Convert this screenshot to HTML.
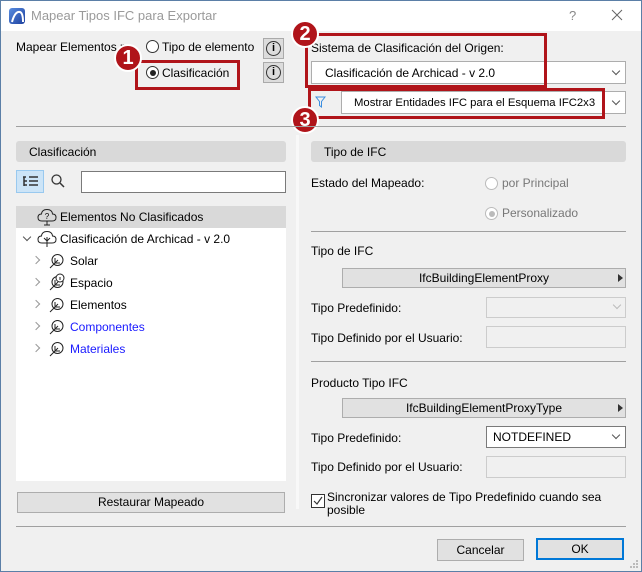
<!DOCTYPE html>
<html><head><meta charset="utf-8"><style>
*{box-sizing:border-box;margin:0;padding:0}
body{width:642px;height:572px;overflow:hidden;background:#f0f0f0;font-family:"Liberation Sans",sans-serif;font-size:12px;color:#000;position:relative}
.a{position:absolute}
.t{position:absolute;white-space:nowrap;line-height:14px}
.badge{position:absolute;width:28px;height:28px;border-radius:50%;background:#b0141a;border:2px solid #fff;color:#fff;font-weight:bold;font-size:20px;text-align:center;line-height:24px}
.red{position:absolute;border:3px solid #b0141a}
.radio{position:absolute;width:13px;height:13px;border-radius:50%;border:1px solid #333;background:#fff}
.hline{position:absolute;height:1px;background:#a0a0a0}
.sel{position:absolute;background:#fff;border:1px solid #adadad}
.chev{position:absolute;width:6px;height:6px;border-right:1px solid #555;border-bottom:1px solid #555;transform:rotate(45deg)}
.btn{position:absolute;background:#e1e1e1;border:1px solid #adadad;text-align:center}
.tri{position:absolute;width:0;height:0;border-top:4px solid transparent;border-bottom:4px solid transparent;border-left:5px solid #333}
.rc{position:absolute;width:6px;height:6px;border-right:1.5px solid #999;border-bottom:1.5px solid #999;transform:rotate(-45deg)}
</style></head><body>
<div class="a" style="left:0;top:0;width:642px;height:31px;background:#fff"></div>
<div class="a" style="left:0;top:0;width:1px;height:572px;background:#5b7fa7"></div>
<div class="a" style="right:0;top:0;width:1px;height:572px;background:#5b7fa7"></div>
<div class="a" style="left:0;bottom:0;width:642px;height:1px;background:#5b7fa7"></div>
<div class="a" style="left:0;top:0;width:642px;height:1px;background:#5b7fa7"></div>
<div class="a" style="left:9px;top:8px;width:16px;height:16px;border-radius:3px;background:linear-gradient(135deg,#5a8ee0,#1c3f9e)"></div>
<svg class="a" style="left:9px;top:8px" width="16" height="16"><path d="M3 14 Q6 3 11 4 Q14 5 14 14" stroke="#fff" stroke-width="2" fill="none"/></svg>
<div class="t" style="left:31px;top:9px;font-size:13px;color:#9a9a9a">Mapear Tipos IFC para Exportar</div>
<div class="t" style="left:569px;top:9px;font-size:13px;color:#888">?</div>
<svg class="a" style="left:611px;top:9px" width="12" height="12"><path d="M1 1L11 11M11 1L1 11" stroke="#666" stroke-width="1"/></svg>

<div class="t" style="left:16px;top:40px">Mapear Elementos p</div>
<div class="radio" style="left:146px;top:40px"></div>
<div class="t" style="left:162px;top:40px">Tipo de elemento</div>
<div class="radio" style="left:146px;top:66px"><div class="a" style="left:2.5px;top:2.5px;width:6px;height:6px;border-radius:50%;background:#222"></div></div>
<div class="t" style="left:162px;top:66px">Clasificación</div>
<div class="red" style="left:135px;top:60px;width:105px;height:30px"></div>
<div class="badge" style="left:114px;top:44px">1</div>
<div class="a" style="left:263px;top:38px;width:21px;height:21px;background:#dcdcdc;border:1px solid #aaa"><div class="a" style="left:2px;top:2px;width:15px;height:15px;border:1px solid #333;border-radius:50%;font-size:11px;text-align:center;line-height:13px;font-weight:bold">i</div></div>
<div class="a" style="left:263px;top:62px;width:21px;height:21px;background:#dcdcdc;border:1px solid #aaa"><div class="a" style="left:2px;top:2px;width:15px;height:15px;border:1px solid #333;border-radius:50%;font-size:11px;text-align:center;line-height:13px;font-weight:bold">i</div></div>

<div class="t" style="left:311px;top:41px">Sistema de Clasificación del Origen:</div>
<div class="sel" style="left:311px;top:61px;width:315px;height:23px"></div>
<div class="t" style="left:325px;top:66px">Clasificación de Archicad - v 2.0</div>
<div class="chev" style="left:613px;top:68px"></div>
<svg class="a" style="left:315px;top:96px" width="11" height="12"><path d="M1 1H10L6.5 5.5V11L4.5 9.5V5.5Z" stroke="#3b8ee0" fill="none"/></svg>
<div class="sel" style="left:341px;top:91px;width:285px;height:23px"></div>
<div class="t" style="left:354px;top:96px;font-size:11.3px">Mostrar Entidades IFC para el Esquema IFC2x3</div>
<div class="chev" style="left:613px;top:98px"></div>
<div class="red" style="left:305px;top:33px;width:242px;height:55px"></div>
<div class="red" style="left:308px;top:88px;width:297px;height:31px"></div>
<div class="badge" style="left:291px;top:20px">2</div>
<div class="badge" style="left:291px;top:106px">3</div>
<div class="hline" style="left:16px;top:126px;width:610px"></div>

<div class="a" style="left:16px;top:141px;width:270px;height:21px;background:#d9d9d9;border-radius:3px"></div>
<div class="t" style="left:29px;top:145px">Clasificación</div>
<div class="a" style="left:16px;top:170px;width:28px;height:23px;background:#cce4f7;border:1px solid #99c9ef"></div>
<svg class="a" style="left:22px;top:175px" width="18" height="14"><path d="M1 2h3M2 2v9M2 6h3M2 10h3M7 2h9M7 6h9M7 10h9" stroke="#333" stroke-width="1.5" fill="none"/></svg>
<svg class="a" style="left:50px;top:173px" width="16" height="16"><circle cx="6.5" cy="6.5" r="4.5" stroke="#333" stroke-width="1.3" fill="none"/><path d="M10 10L14 14" stroke="#333" stroke-width="1.5"/></svg>
<div class="a" style="left:81px;top:171px;width:205px;height:22px;background:#fff;border:1px solid #7a7a7a"></div>
<div class="a" style="left:16px;top:206px;width:270px;height:275px;background:#fff"></div>
<div class="a" style="left:16px;top:206px;width:270px;height:22px;background:#d9d9d9"></div>
<svg class="a" style="left:37px;top:208px" width="20" height="18"><path d="M5 13Q1 13 1 9.5Q1 6 4.5 6Q5 1.5 10 1.5Q15 1.5 15.5 6Q19 6 19 9.5Q19 13 15 13Z M10 13V17M7 17H13" stroke="#222" fill="none"/><text x="10" y="11" font-size="8" text-anchor="middle" font-family="Liberation Sans">?</text></svg>
<div class="t" style="left:60px;top:210px">Elementos No Clasificados</div>
<div class="chev" style="left:24px;top:234px"></div>
<svg class="a" style="left:37px;top:230px" width="20" height="18"><path d="M5 13Q1 13 1 9.5Q1 6 4.5 6Q5 1.5 10 1.5Q15 1.5 15.5 6Q19 6 19 9.5Q19 13 15 13Z M10 17V7M10 11L7 8M10 11L13 8" stroke="#222" fill="none"/></svg>
<div class="t" style="left:60px;top:232px">Clasificación de Archicad - v 2.0</div>

<div class="rc" style="left:33px;top:257px"></div>
<svg class="a" style="left:48px;top:253px" width="18" height="16"><circle cx="9.5" cy="7" r="5.5" stroke="#222" fill="none"/><path d="M2 15L10 7M7 10V5M7 10H12" stroke="#222" fill="none"/></svg>
<div class="t" style="left:70px;top:254px">Solar</div>
<div class="rc" style="left:33px;top:279px"></div>
<svg class="a" style="left:48px;top:273px" width="18" height="18"><circle cx="9.5" cy="9" r="5.5" stroke="#222" fill="none"/><path d="M2 17L10 9M7 12V7M7 12H12" stroke="#222" fill="none"/><circle cx="12" cy="5" r="4" fill="#fff" stroke="#222"/><path d="M12 4v3" stroke="#222"/></svg>
<div class="t" style="left:70px;top:276px">Espacio</div>
<div class="rc" style="left:33px;top:301px"></div>
<svg class="a" style="left:48px;top:297px" width="18" height="16"><circle cx="9.5" cy="7" r="5.5" stroke="#222" fill="none"/><path d="M2 15L10 7M7 10V5M7 10H12" stroke="#222" fill="none"/></svg>
<div class="t" style="left:70px;top:298px">Elementos</div>
<div class="rc" style="left:33px;top:323px"></div>
<svg class="a" style="left:48px;top:319px" width="18" height="16"><circle cx="9.5" cy="7" r="5.5" stroke="#222" fill="none"/><path d="M2 15L10 7M7 10V5M7 10H12" stroke="#222" fill="none"/></svg>
<div class="t" style="left:70px;top:320px;color:#1a1aff">Componentes</div>
<div class="rc" style="left:33px;top:345px"></div>
<svg class="a" style="left:48px;top:341px" width="18" height="16"><circle cx="9.5" cy="7" r="5.5" stroke="#222" fill="none"/><path d="M2 15L10 7M7 10V5M7 10H12" stroke="#222" fill="none"/></svg>
<div class="t" style="left:70px;top:342px;color:#1a1aff">Materiales</div>

<div class="btn" style="left:17px;top:492px;width:268px;height:21px;line-height:19px">Restaurar Mapeado</div>

<div class="a" style="left:296px;top:135px;width:3px;height:374px;background:#f8f8f8"></div>

<div class="a" style="left:311px;top:141px;width:315px;height:21px;background:#d9d9d9;border-radius:3px"></div>
<div class="t" style="left:324px;top:145px">Tipo de IFC</div>
<div class="t" style="left:311px;top:176px">Estado del Mapeado:</div>
<div class="radio" style="left:485px;top:177px;border-color:#bbb"></div>
<div class="t" style="left:502px;top:176px;color:#777">por Principal</div>
<div class="radio" style="left:485px;top:207px;border-color:#bbb"><div class="a" style="left:2.5px;top:2.5px;width:6px;height:6px;border-radius:50%;background:#bbb"></div></div>
<div class="t" style="left:502px;top:206px;color:#777">Personalizado</div>
<div class="hline" style="left:311px;top:231px;width:315px"></div>
<div class="t" style="left:311px;top:244px">Tipo de IFC</div>
<div class="btn" style="left:342px;top:268px;width:284px;height:20px;line-height:18px">IfcBuildingElementProxy</div>
<div class="tri" style="left:618px;top:274px"></div>
<div class="t" style="left:311px;top:301px">Tipo Predefinido:</div>
<div class="a" style="left:486px;top:297px;width:140px;height:21px;background:#f0f0f0;border:1px solid #ccc"></div>
<div class="chev" style="left:614px;top:302px;border-color:#bbb"></div>
<div class="t" style="left:311px;top:331px">Tipo Definido por el Usuario:</div>
<div class="a" style="left:486px;top:326px;width:140px;height:22px;background:#f0f0f0;border:1px solid #ccc"></div>
<div class="hline" style="left:311px;top:361px;width:315px"></div>
<div class="t" style="left:311px;top:376px">Producto Tipo IFC</div>
<div class="btn" style="left:342px;top:398px;width:284px;height:20px;line-height:18px">IfcBuildingElementProxyType</div>
<div class="tri" style="left:618px;top:404px"></div>
<div class="t" style="left:311px;top:431px">Tipo Predefinido:</div>
<div class="a" style="left:486px;top:426px;width:140px;height:22px;background:#fff;border:1px solid #7a7a7a"></div>
<div class="t" style="left:493px;top:430px">NOTDEFINED</div>
<div class="chev" style="left:613px;top:432px"></div>
<div class="t" style="left:311px;top:460px">Tipo Definido por el Usuario:</div>
<div class="a" style="left:486px;top:456px;width:140px;height:22px;background:#f0f0f0;border:1px solid #ccc"></div>
<div class="a" style="left:311px;top:494px;width:14px;height:14px;border:1px solid #333;background:#fff"></div>
<svg class="a" style="left:312px;top:495px" width="12" height="12"><path d="M2 6L5 9L10 2" stroke="#333" stroke-width="1.2" fill="none"/></svg>
<div class="t" style="left:327px;top:490px">Sincronizar valores de Tipo Predefinido cuando sea</div>
<div class="t" style="left:327px;top:503px">posible</div>

<div class="hline" style="left:16px;top:526px;width:610px"></div>
<div class="btn" style="left:437px;top:539px;width:87px;height:22px;line-height:20px">Cancelar</div>
<div class="btn" style="left:536px;top:538px;width:88px;height:22px;line-height:18px;border:2px solid #0078d7">OK</div>
<svg class="a" style="left:628px;top:558px" width="12" height="12"><g fill="#bbb"><rect x="8" y="2" width="2" height="2"/><rect x="5" y="5" width="2" height="2"/><rect x="8" y="5" width="2" height="2"/><rect x="2" y="8" width="2" height="2"/><rect x="5" y="8" width="2" height="2"/><rect x="8" y="8" width="2" height="2"/></g></svg>
</body></html>
